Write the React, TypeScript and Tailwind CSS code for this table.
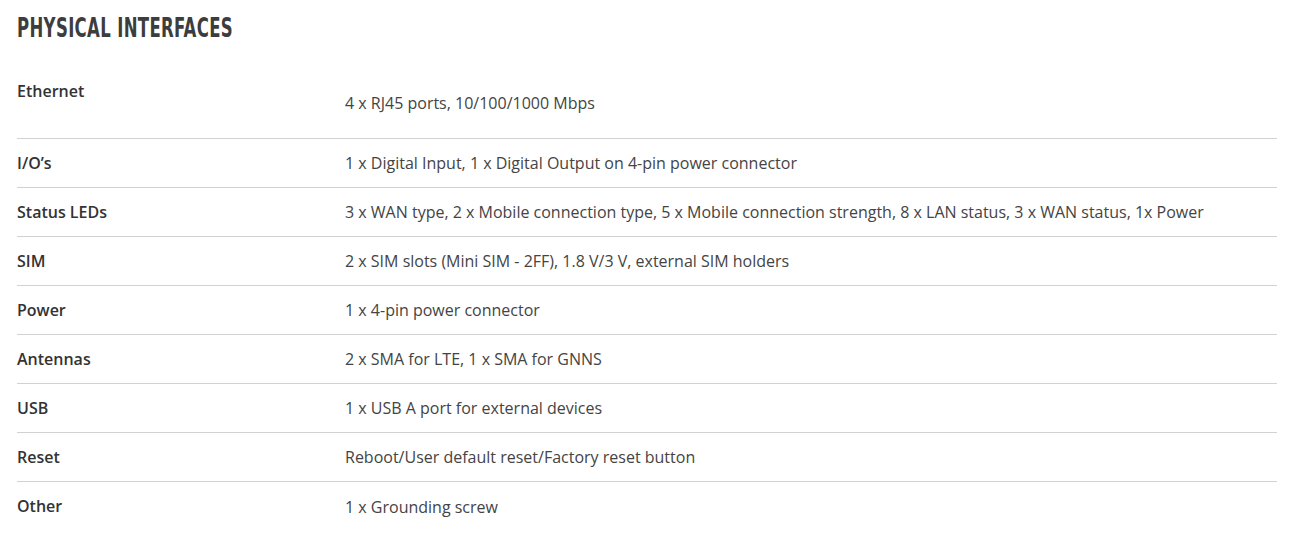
const rows = [
  { label: "Ethernet", value: "4 x RJ45 ports, 10/100/1000 Mbps", tall: true },
  { label: "I/O’s", value: "1 x Digital Input, 1 x Digital Output on 4-pin power connector" },
  {
    label: "Status LEDs",
    value:
      "3 x WAN type, 2 x Mobile connection type, 5 x Mobile connection strength, 8 x LAN status, 3 x WAN status, 1x Power",
  },
  { label: "SIM", value: "2 x SIM slots (Mini SIM - 2FF), 1.8 V/3 V, external SIM holders" },
  { label: "Power", value: "1 x 4-pin power connector" },
  { label: "Antennas", value: "2 x SMA for LTE, 1 x SMA for GNNS" },
  { label: "USB", value: "1 x USB A port for external devices" },
  { label: "Reset", value: "Reboot/User default reset/Factory reset button" },
  { label: "Other", value: "1 x Grounding screw" },
];

export default function App() {
  return (
    <div className="w-[1290px] h-[536px] bg-white px-[17px] pt-[12px] text-[#404040] font-['Open_Sans',sans-serif]">
      <h2 className="origin-left scale-x-[0.68] font-['DejaVu_Sans',sans-serif] font-stretch-condensed font-bold text-[27px] leading-[32px] tracking-[0.5px] text-[#3d3d3d] whitespace-nowrap">
        PHYSICAL INTERFACES
      </h2>

      <div className="mt-[23px] w-[1260px]">
        {rows.map((row, i) => (
          <div
            key={row.label}
            className={`flex ${i < rows.length - 1 ? "border-b border-[#d2d2d2]" : ""} ${
              row.tall ? "h-[72px]" : "h-[49px]"
            }`}
          >
            <div className="w-[328px] shrink-0 pt-[12px] text-[16px] leading-[24px] font-semibold text-[#333]">
              {row.label}
            </div>
            <div className="flex items-center text-[16px] leading-[24px] text-[#444]">{row.value}</div>
          </div>
        ))}
      </div>
    </div>
  );
}
